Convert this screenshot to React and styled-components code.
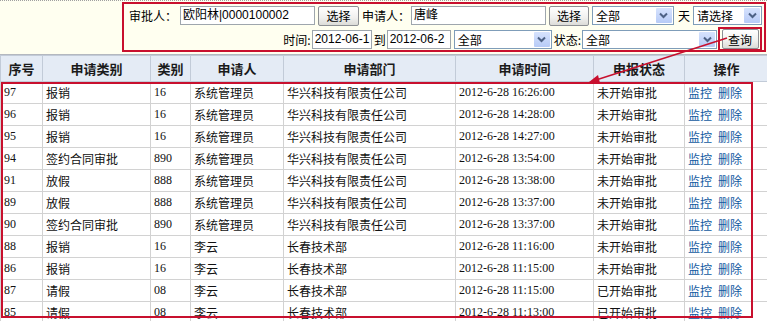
import React from 'react'
import styled, { createGlobalStyle } from 'styled-components'

const GlobalStyle = createGlobalStyle`
  html, body {
    margin: 0;
    padding: 0;
    background: #ffffff;
  }
  body {
    font-family: "Liberation Sans", "Noto Sans CJK SC", sans-serif;
    font-size: 12px;
    color: #000;
  }
`

const Page = styled.div`
  position: relative;
  width: 767px;
  height: 321px;
  overflow: hidden;
`

const TopBar = styled.div`
  box-sizing: border-box;
  height: 55px;
  background: #fffff0;
  border-top: 1px dotted #a0a0a0;
  border-bottom: 1px solid #b4b8bf;
  display: flex;
  justify-content: flex-end;
  padding: 1px 1px 0 0;
`

const FilterBox = styled.div`
  box-sizing: border-box;
  width: 644px;
  height: 50px;
  border: 2px solid #c8102e;
  display: flex;
  flex-direction: column;
  align-items: flex-end;
  padding: 1px 2px 0 0;
  gap: 2px;
`

const FormRow = styled.div`
  display: flex;
  align-items: center;
  height: 22px;
`

const Label = styled.span`
  font-family: "Noto Sans CJK SC", sans-serif;
  font-size: 12px;
  margin: 0 ${({ $r }) => $r || 1}px 0 ${({ $l }) => $l || 0}px;
  white-space: nowrap;
`

const TextBox = styled.div`
  box-sizing: border-box;
  width: ${({ $w }) => $w}px;
  height: ${({ $h }) => $h || 19}px;
  border: 1px solid #9ea6ad;
  background: #fff;
  padding: 0 1px 0 2px;
  font-size: 12px;
  line-height: 17px;
  white-space: nowrap;
  overflow: hidden;
  margin-right: ${({ $r }) => $r || 0}px;
`

const Button = styled.div`
  box-sizing: border-box;
  width: ${({ $w }) => $w}px;
  height: 20px;
  border: 1px solid #8d9094;
  border-radius: 2px;
  background: linear-gradient(#ffffff, #f0f0ee 60%, #dcdcd8);
  display: flex;
  align-items: center;
  justify-content: center;
  font-family: "Noto Sans CJK SC", sans-serif;
  font-size: 12px;
  margin-right: ${({ $r }) => $r || 0}px;
`

const QueryFrame = styled.div`
  box-sizing: border-box;
  width: 44px;
  height: 24px;
  border: 2px solid #c8102e;
  display: flex;
  align-items: center;
  justify-content: center;
  margin-left: 1px;
`

const SelectBox = styled.div`
  box-sizing: border-box;
  width: ${({ $w }) => $w}px;
  height: 19px;
  border: 1px solid #7f9db9;
  background: #fff;
  display: flex;
  align-items: stretch;
  margin-right: ${({ $r }) => $r || 0}px;
`

const SelectText = styled.span`
  flex: 1;
  padding-left: 3px;
  font-family: "Noto Sans CJK SC", sans-serif;
  font-size: 12px;
  line-height: 17px;
`

const SelectArrow = styled.span`
  width: 16px;
  margin: 1px;
  background: linear-gradient(#d6e2fd, #b7cbf7);
  border-radius: 1px;
  display: flex;
  align-items: center;
  justify-content: center;
`

const Chevron = () => (
  <svg width="9" height="7" viewBox="0 0 9 7">
    <polyline points="1,1.5 4.5,5 8,1.5" fill="none" stroke="#4d6185" strokeWidth="2" />
  </svg>
)

const Select = ({ w, r, children }) => (
  <SelectBox $w={w} $r={r}>
    <SelectText>{children}</SelectText>
    <SelectArrow><Chevron /></SelectArrow>
  </SelectBox>
)

const Table = styled.table`
  border-collapse: collapse;
  table-layout: fixed;
  width: 768px;
`

const Th = styled.th`
  height: 25px;
  padding: 0;
  background: #e4ebf5;
  border: 1px solid #c2cbd8;
  font-family: "Liberation Sans", "Noto Sans CJK SC", sans-serif;
  font-size: 13px;
  font-weight: bold;
  color: #1a1a1a;
  text-align: center;
`

const Td = styled.td`
  height: 21px;
  padding: 0 0 0 3px;
  border: 1px solid #d2d2d2;
  font-family: "Liberation Serif", "Noto Sans CJK SC", serif;
  font-size: 12px;
  color: #111;
  white-space: nowrap;
  overflow: hidden;
`

const Link = styled.a`
  color: #11599f;
  text-decoration: none;
  font-family: "Noto Sans CJK SC", sans-serif;
  margin-right: 6px;
`

const Mark = styled.div`
  position: absolute;
  left: 1px;
  top: 82px;
  width: 752px;
  height: 236px;
  box-sizing: border-box;
  border: 2px solid #c8102e;
  pointer-events: none;
`

const Overlay = styled.svg`
  position: absolute;
  left: 0;
  top: 0;
  pointer-events: none;
`

const widths = [42, 108, 40, 93, 172, 138, 91, 84]
const heads = ['序号', '申请类别', '类别', '申请人', '申请部门', '申请时间', '申报状态', '操作']

const rows = [
  ['97', '报销', '16', '系统管理员', '华兴科技有限责任公司', '2012-6-28 16:26:00', '未开始审批'],
  ['96', '报销', '16', '系统管理员', '华兴科技有限责任公司', '2012-6-28 14:28:00', '未开始审批'],
  ['95', '报销', '16', '系统管理员', '华兴科技有限责任公司', '2012-6-28 14:27:00', '未开始审批'],
  ['94', '签约合同审批', '890', '系统管理员', '华兴科技有限责任公司', '2012-6-28 13:54:00', '未开始审批'],
  ['91', '放假', '888', '系统管理员', '华兴科技有限责任公司', '2012-6-28 13:38:00', '未开始审批'],
  ['89', '放假', '888', '系统管理员', '华兴科技有限责任公司', '2012-6-28 13:37:00', '未开始审批'],
  ['90', '签约合同审批', '890', '系统管理员', '华兴科技有限责任公司', '2012-6-28 13:37:00', '未开始审批'],
  ['88', '报销', '16', '李云', '长春技术部', '2012-6-28 11:16:00', '未开始审批'],
  ['86', '报销', '16', '李云', '长春技术部', '2012-6-28 11:15:00', '未开始审批'],
  ['87', '请假', '08', '李云', '长春技术部', '2012-6-28 11:15:00', '已开始审批'],
  ['85', '请假', '08', '李云', '长春技术部', '2012-6-28 11:13:00', '已开始审批'],
]

export default function App() {
  return (
    <Page>
      <GlobalStyle />
      <TopBar>
        <FilterBox>
          <FormRow>
            <Label $r={3}>审批人：</Label>
            <TextBox $w={135} $h={19} $r={3}>欧阳林|0000100002</TextBox>
            <Button $w={41} $r={3}>选择</Button>
            <Label $r={1}>申请人：</Label>
            <TextBox $w={135} $h={19} $r={3}>唐峰</TextBox>
            <Button $w={40} $r={3}>选择</Button>
            <Select w={82}>全部</Select>
            <Label $l={4} $r={3}>天</Label>
            <Select w={69}>请选择</Select>
          </FormRow>
          <FormRow>
            <Label $r={1}>时间:</Label>
            <TextBox $w={60} $r={2}>2012-06-1</TextBox>
            <Label $r={1}>到</Label>
            <TextBox $w={64} $r={3}>2012-06-2</TextBox>
            <Select w={98} r={2}>全部</Select>
            <Label $r={1}>状态:</Label>
            <Select w={135}>全部</Select>
            <QueryFrame>
              <Button $w={37}>查询</Button>
            </QueryFrame>
          </FormRow>
        </FilterBox>
      </TopBar>
      <Table>
        <colgroup>
          {widths.map((w, i) => <col key={i} style={{ width: w }} />)}
        </colgroup>
        <thead>
          <tr>
            {heads.map(h => <Th key={h}>{h}</Th>)}
          </tr>
        </thead>
        <tbody>
          {rows.map(r => (
            <tr key={r[0]}>
              {r.map((c, i) => <Td key={i}>{c}</Td>)}
              <Td>
                <Link href="#">监控</Link>
                <Link href="#">删除</Link>
              </Td>
            </tr>
          ))}
        </tbody>
      </Table>
      <Mark />
      <Overlay width="767" height="321">
        <line x1="727" y1="38" x2="596" y2="80" stroke="#c8102e" strokeWidth="1.5" />
        <polygon points="589,82 598,75 600,83" fill="#c8102e" />
      </Overlay>
    </Page>
  )
}
